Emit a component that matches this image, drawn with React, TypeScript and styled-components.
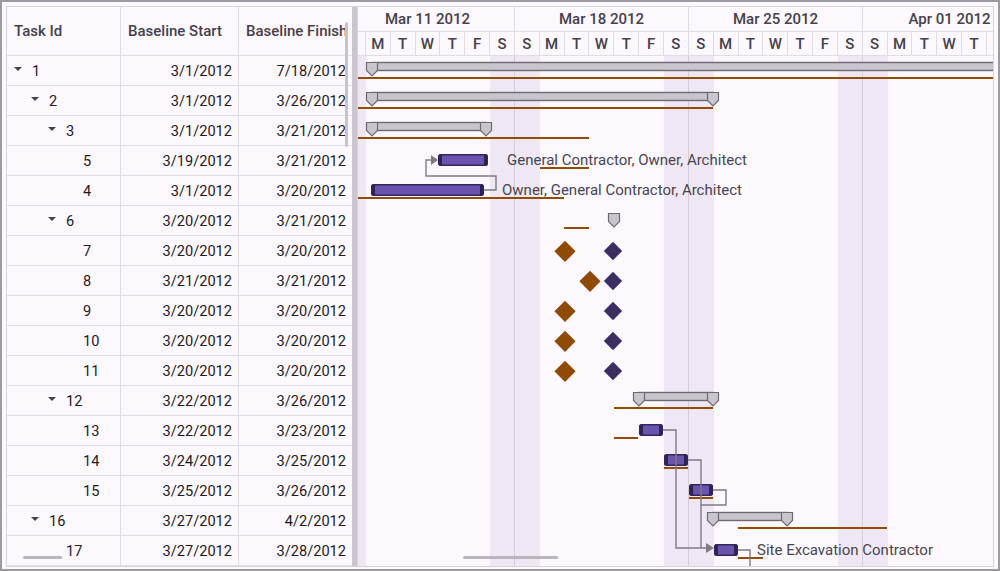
import styled, { createGlobalStyle } from 'styled-components'

const DAY = 174 / 7
const ROW_H = 30

const GlobalStyle = createGlobalStyle`
    html, body {
        margin: 0;
        padding: 0;
        background: #fdf8fd;
    }
    body {
        font-family: Roboto, 'Liberation Sans', sans-serif;
    }
    * {
        box-sizing: border-box;
    }
`

const Frame = styled.div`
    width: 1000px;
    height: 571px;
    border: 2px solid #9d9b9f;
    padding: 4px 4px 0 4px;
    background: #fdf8fd;
`

const Gantt = styled.div`
    display: flex;
    height: 561px;
    border: 1px solid #d9d3dc;
    position: relative;
`

/* ---------- grid side ---------- */

const GridPane = styled.div`
    width: 345px;
    flex: none;
    overflow: hidden;
    position: relative;
`

const GridRow = styled.div<{ $header?: boolean }>`
    display: grid;
    grid-template-columns: 114px 118px 113px;
    height: ${({ $header }) => ($header ? 49 : ROW_H)}px;
    border-bottom: 1px solid #e1dce4;
`

const Cell = styled.div<{ $align?: 'left' | 'right' }>`
    display: flex;
    align-items: center;
    justify-content: ${({ $align }) => ($align === 'right' ? 'flex-end' : 'flex-start')};
    padding: 1px 6px 0 6px;
    border-right: 1px solid #e1dce4;
    font-size: 14.6px;
    color: #1c1b1f;
    white-space: nowrap;
    overflow: hidden;

    &:last-child {
        border-right: none;
    }
`

const HeadCell = styled(Cell)`
    padding: 0 0 0 7px;
    font-size: 15px;
    font-weight: 500;
    color: #45414b;
`

const Indent = styled.span<{ $level: number }>`
    width: ${({ $level }) => $level * 17}px;
    flex: none;
`

const Toggle = styled.span<{ $open: boolean }>`
    width: 19px;
    height: 14px;
    flex: none;
    position: relative;

    &::before {
        content: '';
        display: ${({ $open }) => ($open ? 'block' : 'none')};
        position: absolute;
        left: 1px;
        top: 3px;
        border-left: 4.5px solid transparent;
        border-right: 4.5px solid transparent;
        border-top: 4.5px solid #45414b;
    }
`

const VThumb = styled.div`
    position: absolute;
    right: 4px;
    top: 15px;
    width: 3px;
    height: 125px;
    border-radius: 2px;
    background: #c7c2cb;
`

const HThumb = styled.div<{ $left: number; $width: number }>`
    position: absolute;
    bottom: 7px;
    left: ${({ $left }) => $left}px;
    width: ${({ $width }) => $width}px;
    height: 3px;
    border-radius: 2px;
    background: #b9b4bd;
    z-index: 5;
`

const Splitter = styled.div`
    width: 5px;
    flex: none;
    background: #cbc6ce;
`

/* ---------- chart side ---------- */

const ChartPane = styled.div`
    flex: 1;
    overflow: hidden;
    position: relative;
    border-left: 1px solid #d9d3dc;
`

const ChartInner = styled.div`
    margin-left: -17px;
    width: ${DAY * 28}px;
`

const ChartHeader = styled.div`
    height: 49px;
    border-bottom: 1px solid #e1dce4;
`

const Tier = styled.div<{ $top?: boolean }>`
    display: flex;
    height: ${({ $top }) => ($top ? 25 : 23)}px;
    border-bottom: ${({ $top }) => ($top ? '1px solid #e1dce4' : 'none')};
`

const HeadBox = styled.div<{ $width: number }>`
    width: ${({ $width }) => $width}px;
    flex: none;
    display: flex;
    align-items: center;
    justify-content: center;
    border-right: 1px solid #e1dce4;
    font-size: 15px;
    font-weight: 500;
    color: #45414b;
    white-space: nowrap;
    overflow: hidden;
`

const ChartBody = styled.div`
    position: relative;
`

const DayColumns = styled.div`
    position: absolute;
    inset: 0;
    display: flex;
`

const DayColumn = styled.div<{ $weekend: boolean; $weekEnd: boolean }>`
    width: ${DAY}px;
    flex: none;
    background: ${({ $weekend }) => ($weekend ? '#efe8f4' : 'transparent')};
    border-right: ${({ $weekEnd }) => ($weekEnd ? '1px solid #d3cdd7' : 'none')};
`

const ChartRow = styled.div`
    position: relative;
    height: ${ROW_H}px;
`

const Baseline = styled.div<{ $left: number; $width: number }>`
    position: absolute;
    top: 21px;
    left: ${({ $left }) => $left}px;
    width: ${({ $width }) => $width}px;
    height: 2px;
    background: #944b06;
`

const TaskBar = styled.div<{ $left: number; $width: number }>`
    position: absolute;
    top: 8px;
    left: ${({ $left }) => $left}px;
    width: ${({ $width }) => $width}px;
    height: 12px;
    background: #6a54ad;
    border: 1px solid #33285c;
    border-radius: 2px;
    box-shadow: inset 3px 0 0 #2e2355, inset -3px 0 0 #2e2355, inset 0 1px 0 #4a3c85, inset 0 -1px 0 #4a3c85;
`

const Diamond = styled.div<{ $center: number; $color: string; $size: number }>`
    position: absolute;
    top: 15px;
    left: ${({ $center }) => $center}px;
    width: ${({ $size }) => $size}px;
    height: ${({ $size }) => $size}px;
    background: ${({ $color }) => $color};
    transform: translate(-50%, -50%) rotate(45deg);
`

const Label = styled.span<{ $left: number }>`
    position: absolute;
    top: 0;
    left: ${({ $left }) => $left}px;
    line-height: 28px;
    font-size: 15px;
    color: #49454f;
    white-space: nowrap;
`

const SummarySvg = styled.svg<{ $left: number; $top: number }>`
    position: absolute;
    top: ${({ $top }) => $top}px;
    left: ${({ $left }) => $left}px;
    overflow: visible;
`

const Connectors = styled.svg`
    position: absolute;
    top: 0;
    left: 0;
    pointer-events: none;
    overflow: visible;
`

const shieldPath = (x: number) => `M${x + 0.5},0.5 H${x + 11.5} V8.5 L${x + 6},14 L${x + 0.5},8.5 Z`

function SummaryBar({ left, width, open }: { left: number; width: number; open?: boolean }) {
    return (
        <SummarySvg $left={left} $top={6} width={width} height={16}>
            <rect x={6} y={0.5} width={width - 12} height={8} fill="#c9c5cd" stroke="#6e6a74" strokeWidth={1.4} />
            <path d={shieldPath(0)} fill="#c9c5cd" stroke="#6e6a74" strokeWidth={1.2} />
            {!open && <path d={shieldPath(width - 12)} fill="#c9c5cd" stroke="#6e6a74" strokeWidth={1.2} />}
        </SummarySvg>
    )
}

function Shield({ center }: { center: number }) {
    return (
        <SummarySvg $left={center - 6} $top={7} width={12} height={16}>
            <path d={shieldPath(0)} fill="#c9c5cd" stroke="#6e6a74" strokeWidth={1.2} />
        </SummarySvg>
    )
}

interface ITask {
    id: number
    level: number
    parent: boolean
    start: string
    finish: string
    summary?: [number, number, boolean?]
    bar?: [number, number]
    baseline?: [number, number]
    diamonds?: [number, number]
    shield?: number
    label?: [number, string]
}

const ORANGE = '#8f4a06'
const PURPLE = '#3b2f62'

const tasks: ITask[] = [
    { id: 1, level: 0, parent: true, start: '3/1/2012', finish: '7/18/2012', summary: [25, 720, true], baseline: [-10, 720] },
    { id: 2, level: 1, parent: true, start: '3/1/2012', finish: '3/26/2012', summary: [25, 353], baseline: [-10, 382] },
    { id: 3, level: 2, parent: true, start: '3/1/2012', finish: '3/21/2012', summary: [25, 126], baseline: [-10, 258] },
    { id: 5, level: 3, parent: false, start: '3/19/2012', finish: '3/21/2012', bar: [97, 50], baseline: [199, 49], label: [166, 'General Contractor, Owner, Architect'] },
    { id: 4, level: 3, parent: false, start: '3/1/2012', finish: '3/20/2012', bar: [30, 113], baseline: [-10, 233], label: [161, 'Owner, General Contractor, Architect'] },
    { id: 6, level: 2, parent: true, start: '3/20/2012', finish: '3/21/2012', shield: 273, baseline: [223, 25] },
    { id: 7, level: 3, parent: false, start: '3/20/2012', finish: '3/20/2012', diamonds: [224, 272] },
    { id: 8, level: 3, parent: false, start: '3/21/2012', finish: '3/21/2012', diamonds: [249, 272] },
    { id: 9, level: 3, parent: false, start: '3/20/2012', finish: '3/20/2012', diamonds: [224, 272] },
    { id: 10, level: 3, parent: false, start: '3/20/2012', finish: '3/20/2012', diamonds: [224, 272] },
    { id: 11, level: 3, parent: false, start: '3/20/2012', finish: '3/20/2012', diamonds: [224, 272] },
    { id: 12, level: 2, parent: true, start: '3/22/2012', finish: '3/26/2012', summary: [292, 86], baseline: [273, 99] },
    { id: 13, level: 3, parent: false, start: '3/22/2012', finish: '3/23/2012', bar: [298, 24], baseline: [273, 24] },
    { id: 14, level: 3, parent: false, start: '3/24/2012', finish: '3/25/2012', bar: [323, 24], baseline: [323, 24] },
    { id: 15, level: 3, parent: false, start: '3/25/2012', finish: '3/26/2012', bar: [348, 24], baseline: [348, 24] },
    { id: 16, level: 1, parent: true, start: '3/27/2012', finish: '4/2/2012', summary: [366, 86], baseline: [397, 149] },
    { id: 17, level: 2, parent: false, start: '3/27/2012', finish: '3/28/2012', bar: [373, 24], baseline: [397, 25], label: [416, 'Site Excavation Contractor'] },
]

const weeks = ['Mar 11 2012', 'Mar 18 2012', 'Mar 25 2012', 'Apr 01 2012']
const dayLetters = ['S', 'M', 'T', 'W', 'T', 'F', 'S']
const days = Array.from({ length: 28 }, (_, i) => i)

export default function App() {
    return (
        <>
            <GlobalStyle />
            <Frame>
                <Gantt>
                    <GridPane>
                        <GridRow $header>
                            <HeadCell>Task Id</HeadCell>
                            <HeadCell>Baseline Start</HeadCell>
                            <HeadCell>Baseline Finish</HeadCell>
                        </GridRow>
                        {tasks.map((task) => (
                            <GridRow key={task.id}>
                                <Cell>
                                    <Indent $level={task.level} />
                                    <Toggle $open={task.parent} />
                                    {task.id}
                                </Cell>
                                <Cell $align="right">{task.start}</Cell>
                                <Cell $align="right">{task.finish}</Cell>
                            </GridRow>
                        ))}
                        <VThumb />
                        <HThumb $left={16} $width={39} />
                    </GridPane>
                    <Splitter />
                    <ChartPane>
                        <ChartInner>
                            <ChartHeader>
                                <Tier $top>
                                    {weeks.map((w) => (
                                        <HeadBox key={w} $width={DAY * 7}>{w}</HeadBox>
                                    ))}
                                </Tier>
                                <Tier>
                                    {days.map((d) => (
                                        <HeadBox key={d} $width={DAY}>{dayLetters[d % 7]}</HeadBox>
                                    ))}
                                </Tier>
                            </ChartHeader>
                            <ChartBody>
                                <DayColumns>
                                    {days.map((d) => (
                                        <DayColumn key={d} $weekend={d % 7 === 0 || d % 7 === 6} $weekEnd={d % 7 === 6} />
                                    ))}
                                </DayColumns>
                                {tasks.map((task) => (
                                    <ChartRow key={task.id}>
                                        {task.baseline && <Baseline $left={task.baseline[0]} $width={task.baseline[1]} />}
                                        {task.summary && <SummaryBar left={task.summary[0]} width={task.summary[1]} open={task.summary[2]} />}
                                        {task.shield !== undefined && <Shield center={task.shield} />}
                                        {task.bar && <TaskBar $left={task.bar[0]} $width={task.bar[1]} />}
                                        {task.diamonds && (
                                            <>
                                                <Diamond $center={task.diamonds[0]} $color={ORANGE} $size={14.5} />
                                                <Diamond $center={task.diamonds[1]} $color={PURPLE} $size={13} />
                                            </>
                                        )}
                                        {task.label && <Label $left={task.label[0]}>{task.label[1]}</Label>}
                                    </ChartRow>
                                ))}
                                <Connectors width={DAY * 28} height={tasks.length * ROW_H}>
                                    <g fill="none" stroke="#7f7a85" strokeWidth={1.4}>
                                        <path d="M143,134 H155 V120 H85 V104 H91" />
                                        <path d="M322,374 H335 V492 H366" />
                                        <path d="M347,404 H360 V492" />
                                        <path d="M372,434 H385 V449 H360" />
                                        <path d="M397,494 H409 V520" />
                                    </g>
                                    <g fill="#7f7a85">
                                        <polygon points="90,99 97,104 90,109" />
                                        <polygon points="365,487 373,492 365,497" />
                                    </g>
                                </Connectors>
                            </ChartBody>
                        </ChartInner>
                        <HThumb $left={105} $width={95} />
                    </ChartPane>
                </Gantt>
            </Frame>
        </>
    )
}
